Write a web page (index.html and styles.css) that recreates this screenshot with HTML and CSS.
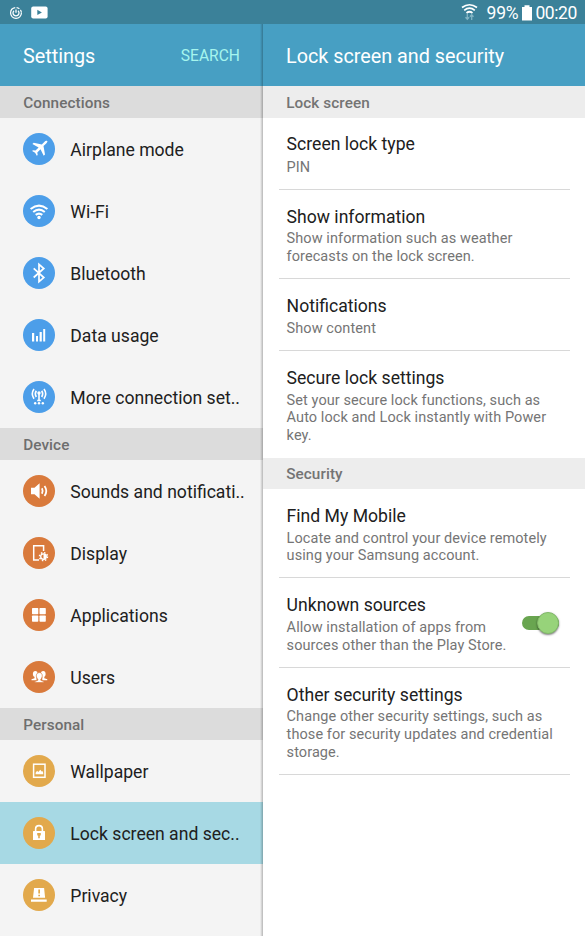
FILE: index.html
```html
<!DOCTYPE html>
<html lang="en">
<head>
<meta charset="utf-8">
<title>Settings</title>
<link rel="stylesheet" href="styles.css">
</head>
<body>
<div class="screen">
  <header class="status">
    <svg class="st-sync" width="14" height="14" viewBox="0 0 14 14" fill="none" stroke="#fff"><circle cx="7" cy="7" r="5.4" stroke-width="1.2" stroke-dasharray="24 1.4 3 1.4 3 1.2"/><path d="M5 4.7a3 3 0 1 0 4 0M7 3.4v3.4" stroke-width="1.3"/></svg>
    <svg class="st-play" width="17" height="13" viewBox="0 0 17 13"><rect x=".2" y=".5" width="16.4" height="12" rx="2" fill="#fff"/><path d="M6.3 3.8v5.2l4.6-2.6z" fill="#3b8199"/></svg>
    <svg class="st-wifi" width="17" height="18" viewBox="0 0 17 18" fill="none" stroke="#fff" stroke-width="1.7"><path d="M1 4.500q7.500-5.500 15 0M3.200 7.300q5.300-4.400 10.600 0M5.500 10q3-2.500 6 0"/><path d="M6.300 11v5M4.500 14.300l1.800 2 1.800-2M10.700 17v-5M8.900 13.800l1.800-2 1.800 2" stroke="#82b4c4" stroke-width="1.300"/></svg>
    <span class="pct">99%</span>
    <svg class="st-batt" width="10" height="16" viewBox="0 0 10 16"><path d="M0 2h2.500V.3h5V2H10v13.500H0z" fill="#fff"/></svg>
    <span class="clock">00:20</span>
  </header>
  <div class="panes">
    <nav class="left">
      <div class="bar"><h1>Settings</h1><span class="search">SEARCH</span></div>
      <h2 class="section">Connections</h2>
      <div class="row"><svg class="icon blue" viewBox="0 0 32 32"><path fill="#fff" d="M24.300 8.100c-.8-.6-2.100-.1-3 .8l-2.500 2.500-8.100-1.700-1.300 1.300 6.200 3.400-3.100 3.200-2.500-.4-.9.9 3 1.700 1.700 3 .9-.9-.4-2.500 3.200-3.100 3.200 6.400 1.300-1.300-1.500-8.300 2.700-2.500c1-1 1.500-2 1.100-2.500z"/></svg><span>Airplane mode</span></div>
      <div class="row"><svg class="icon blue" viewBox="0 0 32 32"><g fill="none" stroke="#fff" stroke-width="2.100"><path d="M7.600 14q8.400-6.700 16.800 0M10.200 17q5.800-4.600 11.600 0M12.700 19.900q3.300-2.700 6.600 0"/></g><circle cx="16" cy="22.500" r="1.700" fill="#fff"/></svg><span>Wi-Fi</span></div>
      <div class="row"><svg class="icon blue" viewBox="0 0 32 32"><path d="M10.700 11.400l10.100 9.200L16 24.700V7.300l4.800 4.200-10.100 9" fill="none" stroke="#fff" stroke-width="1.700"/></svg><span>Bluetooth</span></div>
      <div class="row"><svg class="icon blue" viewBox="0 0 32 32"><path fill="#fff" d="M9 14h2.200v8.500H9zM13 17h2v5.500h-2zM16.600 13h2.200v9.500h-2.200zM20.200 10h2v12.500h-2z"/></svg><span>Data usage</span></div>
      <div class="row"><svg class="icon blue" viewBox="0 0 32 32"><g fill="none" stroke="#fff" stroke-width="1.600"><path d="M11 8q-3.400 4.800 0 9.700M21 8q3.400 4.800 0 9.700M13.300 9.700q-2 3.100 0 6.300M18.700 9.700q2 3.100 0 6.300M16 13v6.800M14.200 19.500h3.600"/></g><g fill="#fff"><circle cx="16" cy="12" r="1.700"/><circle cx="12.200" cy="22.300" r="1.200"/><circle cx="16" cy="22.300" r="1.200"/><circle cx="19.800" cy="22.300" r="1.200"/></g></svg><span>More connection set..</span></div>
      <h2 class="section">Device</h2>
      <div class="row"><svg class="icon orange" viewBox="0 0 32 32"><path fill="#fff" d="M8 12.800h3.500L16.600 8.300v15.400l-5.100-4.400H8z"/><path d="M18.900 13.300q1.500 2.700 0 5.400M21.500 11q3.600 5 0 10" fill="none" stroke="#fff" stroke-width="1.800"/></svg><span>Sounds and notificati..</span></div>
      <div class="row"><svg class="icon orange" viewBox="0 0 32 32"><path d="M16 23h-5.300V8.800h9.900v5.200" fill="none" stroke="#fff" stroke-width="1.500"/><circle cx="20.500" cy="19.600" r="4" fill="none" stroke="#fff" stroke-width="1.500" stroke-dasharray="1.500 1.640"/><circle cx="20.500" cy="19.600" r="2.800" fill="none" stroke="#fff" stroke-width="1.300"/><path d="M20.500 16.800a2.800 2.800 0 0 1 0 5.600z" fill="#fff"/></svg><span>Display</span></div>
      <div class="row"><svg class="icon orange" viewBox="0 0 32 32"><g fill="#fff"><rect x="9" y="9" width="6.300" height="6.300" rx=".7"/><rect x="16.500" y="9" width="6.300" height="6.300" rx=".7"/><rect x="9" y="16.500" width="6.300" height="6.300" rx=".7"/><rect x="16.500" y="16.500" width="6.300" height="6.300" rx=".7"/></g></svg><span>Applications</span></div>
      <div class="row"><svg class="icon orange" viewBox="0 0 32 32"><g fill="#fff"><ellipse cx="12.300" cy="13" rx="2.400" ry="3"/><ellipse cx="20.200" cy="13" rx="2.400" ry="3"/><path d="M8.500 19.200v-1l3-1v-2h2v4zM24.300 19.200v-1l-3-1v-2h-2v4z"/></g><path d="M16.300 11.600c3.800 0 3.500 4.800 1.500 6.700v1l3 1.300v1h-9v-1l3-1.300v-1c-2-1.900-2.300-6.700 1.500-6.700z" fill="#fff" stroke="#d97a3c" stroke-width=".7"/></svg><span>Users</span></div>
      <h2 class="section">Personal</h2>
      <div class="row"><svg class="icon yellow" viewBox="0 0 32 32"><rect x="10.600" y="9.200" width="11.400" height="13.100" fill="none" stroke="#fff" stroke-width="1.500"/><path d="M12.600 19.200v-1.500l1.500-1.900 1.200 1.200 2-2.200 1.300 1.800.8-.7.800 1.800v1.500z" fill="#fff"/></svg><span>Wallpaper</span></div>
      <div class="row selected"><svg class="icon yellow" viewBox="0 0 32 32"><path d="M12.600 14.500V12q0-3.400 3.400-3.400t3.400 3.400v2.500" fill="none" stroke="#fff" stroke-width="1.600"/><rect x="10" y="13.900" width="12" height="9.100" rx=".6" fill="#fff"/><path d="M14.200 16h3.600v2.200l-1 .6v2.500h-1.600v-2.500l-1-.6z" fill="#e2a94c"/></svg><span>Lock screen and sec..</span></div>
      <div class="row"><svg class="icon yellow" viewBox="0 0 32 32"><path d="M11.100 8.900h10l1 9.800H10zM8 20.600h15.700v2.200H8z" fill="#fff"/><path d="M15.300 10.400h1.700v4.200h-1.700zM15.300 15.700h1.700v1.500h-1.700z" fill="#e2a94c"/></svg><span>Privacy</span></div>
    </nav>
    <main class="right">
      <div class="bar"><h1>Lock screen and security</h1></div>
      <h2 class="section">Lock screen</h2>
      <div class="item"><h3>Screen lock type</h3><p>PIN</p></div>
      <div class="item"><h3>Show information</h3><p>Show information such as weather<br>forecasts on the lock screen.</p></div>
      <div class="item"><h3>Notifications</h3><p>Show content</p></div>
      <div class="item last"><h3>Secure lock settings</h3><p>Set your secure lock functions, such as<br>Auto lock and Lock instantly with Power<br>key.</p></div>
      <h2 class="section">Security</h2>
      <div class="item"><h3>Find My Mobile</h3><p>Locate and control your device remotely<br>using your Samsung account.</p></div>
      <div class="item with-switch"><div><h3>Unknown sources</h3><p>Allow installation of apps from<br>sources other than the Play Store.</p></div><div class="switch"><div class="knob"></div></div></div>
      <div class="item"><h3>Other security settings</h3><p>Change other security settings, such as<br>those for security updates and credential<br>storage.</p></div>
    </main>
  </div>
</div>
</body>
</html>
```
FILE: styles.css
```css
* { box-sizing: border-box; }
body { margin: 0; background: #fff; font-family: Roboto, sans-serif; color: #202020; }
h1, h2, h3, p { margin: 0; font-weight: 400; }
.screen { width: 585px; height: 936px; overflow: hidden; display: flex; flex-direction: column; }
.status { height: 24px; flex: none; background: #3b8199; color: #fff; display: flex; align-items: center; padding: 1px 8px 0 9px; font-size: 17.500px; white-space: nowrap; }
.st-play { margin-left: 8px; }
.st-wifi { margin-left: auto; margin-top: -2px; }
.pct { margin-left: 9px; letter-spacing: -.2px; }
.st-batt { margin-left: 4px; }
.clock { margin-left: 3px; letter-spacing: -.4px; }
.panes { flex: 1; display: flex; }
.left { position: relative; width: 263px; flex: none; background: #f4f4f4; }
.left::after { content: ""; position: absolute; top: 0; right: 0; bottom: 0; width: 3px; background: linear-gradient(to right, transparent, rgba(0,0,0,.25)); }
.right { flex: 1; background: #fff; }
.bar { height: 62px; background: #479fc3; color: #fff; display: flex; align-items: center; justify-content: space-between; padding: 2px 23px 0; white-space: nowrap; }
.bar h1 { font-size: 19.800px; }
.search { color: #a5f5ee; font-size: 15.600px; }
.section { height: 31.500px; line-height: 34px; padding-left: 23.200px; font-size: 15.300px; letter-spacing: .08px; font-weight: 500; color: #6e6e6e; background: #dcdcdc; }
.right .section { background: #ededed; color: #747474; }
.right .item ~ .section { height: 31px; line-height: 33px; }
.row { height: 62.150px; display: flex; align-items: center; padding-left: 23px; gap: 15.300px; font-size: 17.600px; white-space: nowrap; }
.row span { padding-top: 2.400px; }
.selected { background: #a7d9e4; }
.icon { width: 32px; height: 32px; border-radius: 50%; flex: none; }
.blue { background: #4c9ee9; }
.orange { background: #d97a3c; }
.yellow { background: #e2a94c; }
.item { margin: 0 15px 0 16px; padding: 15.900px 0 12.500px 7.600px; border-bottom: 1px solid #d8d8d8; white-space: nowrap; }
.item.last { border-bottom-color: transparent; }
.item:nth-child(3) p { padding-top: .5px; }
.item h3 { font-size: 17.600px; line-height: 22px; }
.item p { margin-top: 2.800px; font-size: 14.500px; letter-spacing: .08px; line-height: 17.600px; color: #757575; }
.with-switch { display: flex; align-items: center; justify-content: space-between; }
.switch { width: 37px; height: 14px; border-radius: 7px; background: #69a550; margin: 0 11px 3px 0; display: flex; align-items: center; justify-content: flex-end; }
.knob { width: 22px; height: 22px; flex: none; border-radius: 50%; background: #97d37a; box-shadow: 0 1px 2px rgba(0,0,0,.5); border: 1px solid #82ba69; }
```
